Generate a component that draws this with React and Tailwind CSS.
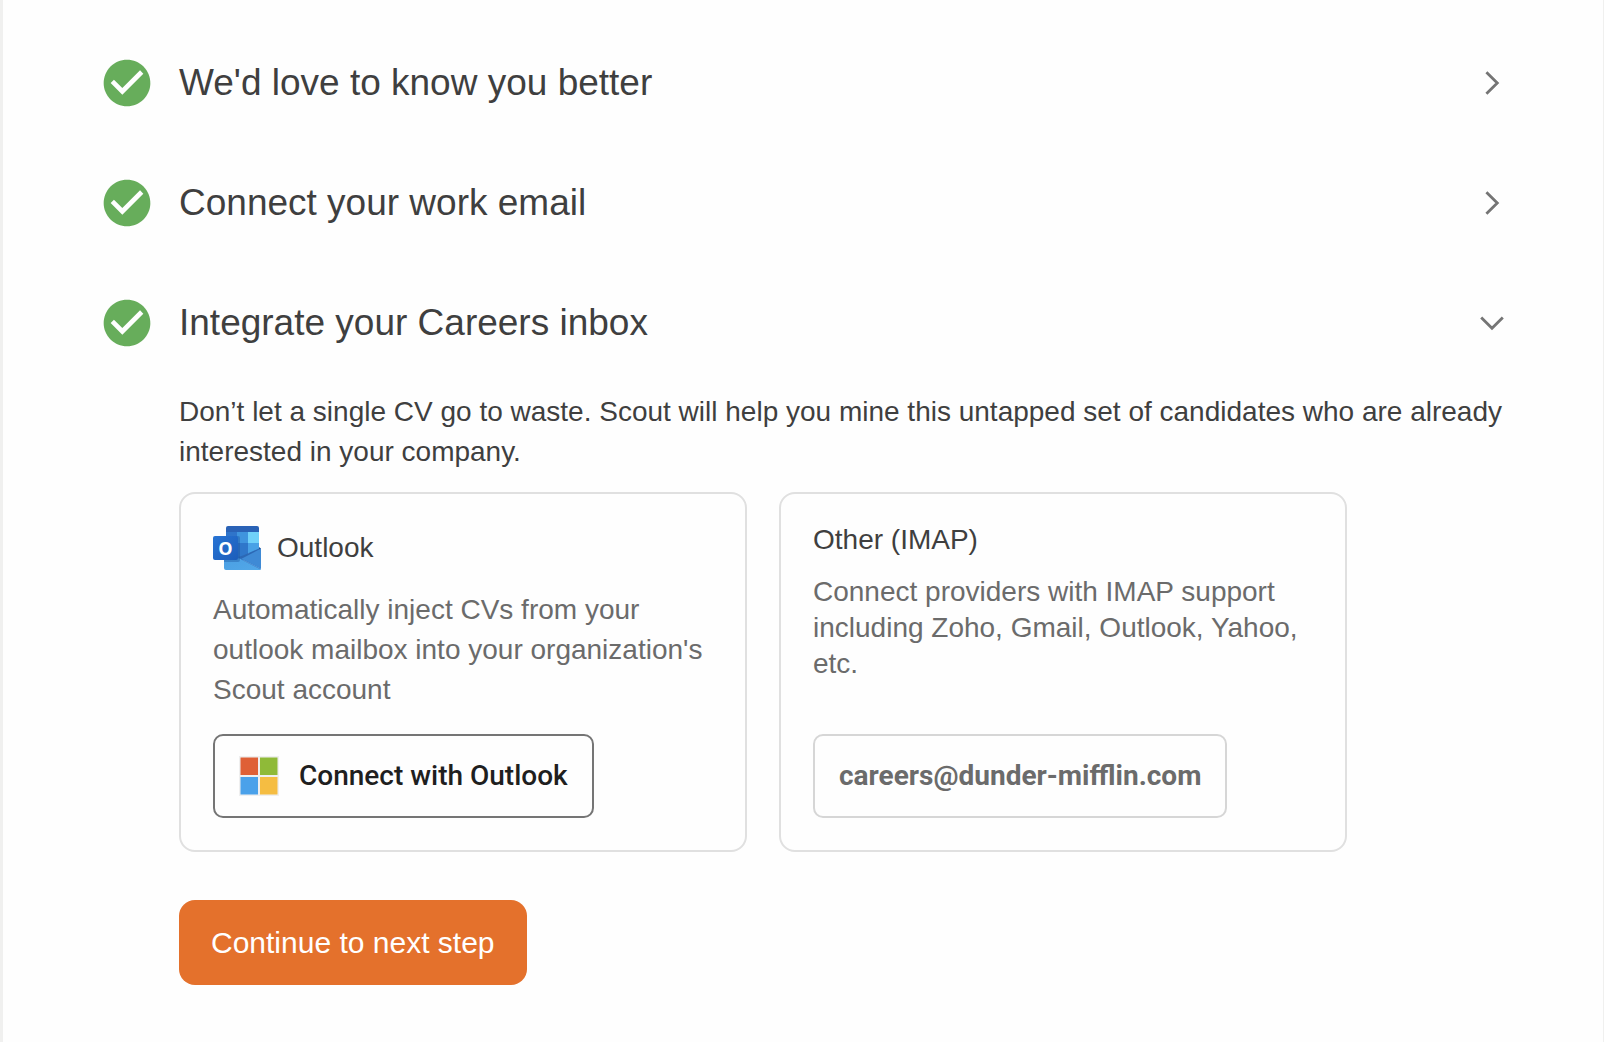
import React, { useState } from 'react';

const STEPS = [
    { id: 'profile', title: "We'd love to know you better" },
    { id: 'email', title: 'Connect your work email' },
    { id: 'careers', title: 'Integrate your Careers inbox' },
];

const CheckCircleIcon = () => (
    <svg viewBox="0 0 24 24" className="w-14 h-14 shrink-0 fill-[#67ad5b]" aria-hidden="true">
        <path d="M12 2C6.48 2 2 6.48 2 12s4.48 10 10 10 10-4.48 10-10S17.52 2 12 2z" />
        <path fill="#fff" d="M10 17l-5-5 1.41-1.41L10 14.17l7.59-7.59L19 8l-9 9z" />
    </svg>
);

const ExpandIcon = ({ open }) => (
    <svg
        viewBox="0 0 24 24"
        className={`w-12 h-12 shrink-0 fill-none stroke-[#757575] ${open ? '' : '-rotate-90'}`}
        aria-hidden="true"
    >
        <path strokeWidth="1.400" d="M6.600 9.200l5.400 5.450 5.400-5.450" />
    </svg>
);

const OutlookLogo = () => (
    <svg viewBox="0 0 48 44" className="w-12 h-11 shrink-0" aria-hidden="true">
        <defs>
            <linearGradient id="tile" x1="0" y1="0" x2="1" y2="1">
                <stop offset="0" stopColor="#2874d4" />
                <stop offset="1" stopColor="#1c5dba" />
            </linearGradient>
            <linearGradient id="flap" x1="0" y1="0" x2="1" y2="1">
                <stop offset="0" stopColor="#4a9ee3" />
                <stop offset="1" stopColor="#52a8e8" />
            </linearGradient>
        </defs>
        <path fill="#2a62b6" d="M15 0h29a2 2 0 0 1 2 2v5H13V2a2 2 0 0 1 2-2z" />
        <path fill="#2f74ca" d="M13 6h11v11H13z" />
        <path fill="#3f94de" d="M24 6h11v11H24z" />
        <path fill="#70d1f9" d="M35 6h11v11H35z" />
        <path fill="#2460b4" d="M13 17h11v17H13z" />
        <path fill="#2f77ca" d="M24 17h11v17H24z" />
        <path fill="#48a1e6" d="M35 17h11v10H35z" />
        <path fill="#1b4a8f" d="M46 21l2 1.500-2 3z" />
        <path fill="#2c68b5" d="M25 31l5-1.500 16-7v4l-16 8z" />
        <path fill="#3f8ad5" d="M48 22.500V43L28 33z" />
        <path fill="url(#flap)" d="M11 29l17 4L48 43a1.500 1.500 0 0 1-1.500 1H13a2 2 0 0 1-2-2z" />
        <path fill="none" stroke="#2f70bf" strokeWidth="0.600" d="M28 33l19.500 10" />
        <path fill="#174a96" opacity="0.35" d="M11 10h14a2 2 0 0 1 2 2v22a2 2 0 0 1-2 2H11z" />
        <rect y="10" width="25" height="24" rx="2" fill="url(#tile)" />
        <text
            x="12.500"
            y="28.500"
            textAnchor="middle"
            fill="#fff"
            fontSize="18"
            fontWeight="700"
            fontFamily="'Open Sans', sans-serif"
        >
            O
        </text>
    </svg>
);

const MicrosoftLogo = () => (
    <svg viewBox="0 0 40 40" className="w-10 h-10 shrink-0" aria-hidden="true">
        <path fill="#efefef" d="M0 0h40v40H0z" />
        <path fill="#df6036" d="M1.500 1.500h17.500v17.500H1.500z" />
        <path fill="#8fba38" d="M21 1.500h17.500v17.500H21z" />
        <path fill="#4aa1ea" d="M1.500 21h17.500v17.500H1.500z" />
        <path fill="#f5bd42" d="M21 21h17.500v17.500H21z" />
    </svg>
);

const ProviderCard = ({ children }) => (
    <div className="flex-1 max-w-[568px] flex flex-col items-start p-8 border-2 border-[#e0e0e0] rounded-2xl">
        {children}
    </div>
);

const CareersInbox = () => (
    <div className="pt-[9px] pl-20 text-[28px]">
        <p className="leading-10">
            Don’t let a single CV go to waste. Scout will help you mine this untapped set of candidates who are already
            interested in your company.
        </p>

        <div className="mt-5 flex gap-8">
            <ProviderCard>
                <div className="flex items-center gap-4">
                    <OutlookLogo />
                    <h3 className="leading-10">Outlook</h3>
                </div>
                <p className="mt-5 mb-6 leading-10 text-[#6b6b6b]">
                    Automatically inject CVs from your outlook mailbox into your organization's Scout account
                </p>
                <button
                    type="button"
                    className="mt-auto flex items-center gap-5 px-6 py-5 border-2 border-[#757575] rounded-[10px] font-[Roboto,sans-serif] font-medium leading-10 text-[#1f1f1f]"
                >
                    <MicrosoftLogo />
                    Connect with Outlook
                </button>
            </ProviderCard>

            <ProviderCard>
                <h3 className="leading-7">Other (IMAP)</h3>
                <p className="mt-5 mb-6 leading-9 text-[#6b6b6b]">
                    Connect providers with IMAP support including Zoho, Gmail, Outlook, Yahoo, etc.
                </p>
                <button
                    type="button"
                    className="mt-auto px-6 py-5 border-2 border-[#d6d6d6] rounded-[10px] font-[Roboto,sans-serif] font-bold leading-10 text-[#6b6b6b]"
                >
                    careers@dunder-mifflin.com
                </button>
            </ProviderCard>
        </div>

        <button
            type="button"
            className="mt-12 px-8 py-5 rounded-2xl bg-[#e4712c] text-[30px] leading-[45px] text-white"
        >
            Continue to next step
        </button>
    </div>
);

const App = () => {
    const [openStep, setOpenStep] = useState('careers');

    return (
        <main className="min-h-screen pt-[23px] pl-24 pr-[87px] pb-14 border-l-3 border-r border-[#f0f0ef] bg-[#fefefe] font-['Liberation_Sans',Arial,sans-serif] text-[#3f3f3f]">
            {STEPS.map((step) => {
                const open = step.id === openStep;
                return (
                    <section key={step.id}>
                        <h2>
                            <button
                                type="button"
                                aria-expanded={open}
                                onClick={() => setOpenStep(open ? null : step.id)}
                                className="w-full h-30 flex items-center gap-6 text-left text-[37px] leading-[48px]"
                            >
                                <CheckCircleIcon />
                                <span className="flex-1">{step.title}</span>
                                <ExpandIcon open={open} />
                            </button>
                        </h2>
                        {open && step.id === 'careers' && <CareersInbox />}
                    </section>
                );
            })}
        </main>
    );
};

export default App;
